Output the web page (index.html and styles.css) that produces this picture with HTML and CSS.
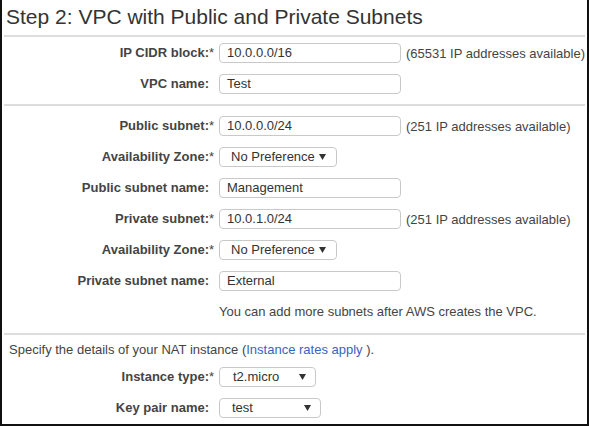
FILE: index.html
```html
<!DOCTYPE html>
<html>
<head>
<meta charset="utf-8">
<link rel="stylesheet" href="styles.css">
</head>
<body>
<div class="panel">
  <h1 class="title">Step 2: VPC with Public and Private Subnets</h1>

  <section class="group g1">
    <div class="row">
      <label class="lbl">IP CIDR block:<span class="req">*</span></label>
      <div class="input">10.0.0.0/16</div>
      <span class="hint">(65531 IP addresses available)</span>
    </div>
    <div class="row">
      <label class="lbl">VPC name:</label>
      <div class="input">Test</div>
    </div>
  </section>

  <section class="group g2">
    <div class="row">
      <label class="lbl">Public subnet:<span class="req">*</span></label>
      <div class="input">10.0.0.0/24</div>
      <span class="hint">(251 IP addresses available)</span>
    </div>
    <div class="row">
      <label class="lbl">Availability Zone:<span class="req">*</span></label>
      <div class="select sel-az"><span>No Preference</span><svg class="caret" width="7" height="6" viewBox="0 0 7 6"><polygon points="0,0 7,0 3.5,6" /></svg></div>
    </div>
    <div class="row">
      <label class="lbl">Public subnet name:</label>
      <div class="input">Management</div>
    </div>
    <div class="row">
      <label class="lbl">Private subnet:<span class="req">*</span></label>
      <div class="input">10.0.1.0/24</div>
      <span class="hint">(251 IP addresses available)</span>
    </div>
    <div class="row">
      <label class="lbl">Availability Zone:<span class="req">*</span></label>
      <div class="select sel-az"><span>No Preference</span><svg class="caret" width="7" height="6" viewBox="0 0 7 6"><polygon points="0,0 7,0 3.5,6" /></svg></div>
    </div>
    <div class="row">
      <label class="lbl">Private subnet name:</label>
      <div class="input">External</div>
    </div>
    <div class="row note-row">
      <span class="lbl"></span>
      <span class="note">You can add more subnets after AWS creates the VPC.</span>
    </div>
  </section>

  <section class="group g3">
    <p class="specify">Specify the details of your NAT instance (<a class="link" href="#">Instance rates apply</a> ).</p>
    <div class="row">
      <label class="lbl">Instance type:<span class="req">*</span></label>
      <div class="select sel-type"><span>t2.micro</span><svg class="caret" width="7" height="6" viewBox="0 0 7 6"><polygon points="0,0 7,0 3.5,6" /></svg></div>
    </div>
    <div class="row">
      <label class="lbl">Key pair name:</label>
      <div class="select sel-key"><span>test</span><svg class="caret" width="7" height="6" viewBox="0 0 7 6"><polygon points="0,0 7,0 3.5,6" /></svg></div>
    </div>
  </section>
</div>
</body>
</html>
```

FILE: styles.css
```css
html, body {
  margin: 0;
  padding: 0;
  background: #fff;
}

body {
  font-family: "Liberation Sans", Arial, sans-serif;
  font-size: 13px;
  color: #444;
}

.panel {
  box-sizing: border-box;
  width: 589px;
  height: 426px;
  border: 2px solid #111;
  border-top: none;
  overflow: hidden;
}

.title {
  margin: 0 0 5px 0;
  padding: 4px 0 0 4px;
  font-size: 21px;
  line-height: 26px;
  font-weight: normal;
  color: #333;
}

.group {
  margin: 0 2px;
  border-top: 2px solid #dddddd;
  display: flex;
  flex-direction: column;
  gap: 11px;
}

.g1 {
  padding: 6px 0 10px 0;
}

.g2 {
  padding: 10px 0 11px 0;
}

.g3 {
  padding: 5px 0 0 0;
  gap: 11px;
}

.row {
  display: flex;
  align-items: center;
  height: 20px;
}

.lbl {
  width: 205px;
  flex: none;
  text-align: right;
  font-weight: bold;
  color: #444;
  margin-right: 10px;
  line-height: 20px;
  white-space: nowrap;
}

.req {
  font-weight: normal;
  display: inline-block;
  width: 5px;
  margin-right: -5px;
  text-align: left;
}

.input, .select {
  box-sizing: border-box;
  height: 20px;
  border: 1px solid #c9c9c9;
  border-radius: 4px;
  background: #fff;
  color: #333;
  line-height: 18px;
  display: flex;
  align-items: center;
}

.input {
  width: 182px;
  padding-left: 7px;
}

.select {
  justify-content: space-between;
  padding-left: 11px;
  padding-right: 10px;
}

.sel-az {
  width: 118px;
}

.sel-type {
  width: 97px;
  padding-left: 13px;
  padding-right: 9px;
}

.sel-key {
  width: 102px;
  padding-left: 12px;
  padding-right: 9px;
}

.caret {
  display: block;
  fill: #333;
}

.hint {
  margin-left: 5px;
  color: #444;
  white-space: nowrap;
}

.note {
  color: #444;
  line-height: 20px;
}

.specify {
  margin: 0 0 -4px 0;
  padding-left: 5px;
  line-height: 20px;
  color: #444;
}

.link {
  color: #3a62c4;
  text-decoration: none;
}
```
